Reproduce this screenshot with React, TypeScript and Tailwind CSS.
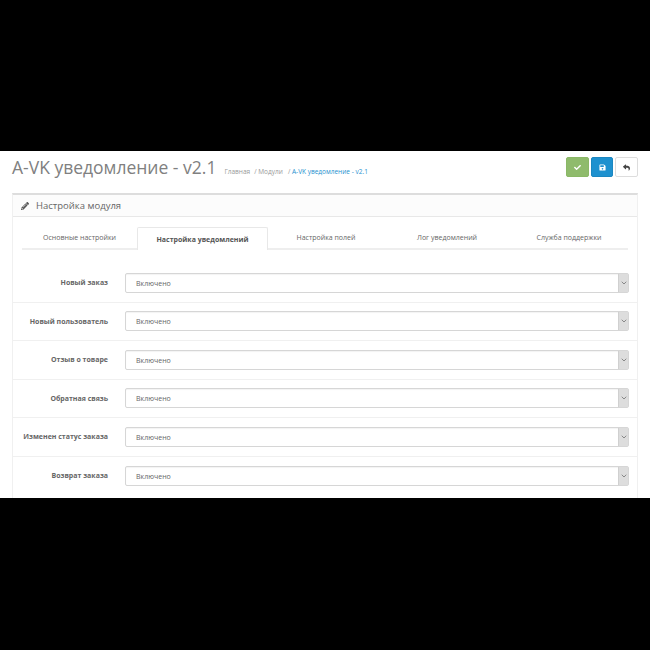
import { FaCheck, FaPencilAlt, FaReply, FaSave } from "react-icons/fa"
import { ChevronDown } from "lucide-react"

const tabs = [
  { label: "Основные настройки", width: "w-[115px]" },
  { label: "Настройка уведомлений", width: "w-[131px]" },
  { label: "Настройка полей", width: "w-[116px]" },
  { label: "Лог уведомлений", width: "w-[126px]" },
  { label: "Служба поддержки", width: "flex-1" },
]

const rows = ["Новый заказ", "Новый пользователь", "Отзыв о товаре", "Обратная связь", "Изменен статус заказа", "Возврат заказа"]

function SelectRow({ label }: { label: string }) {
  return (
    <div className="flex items-center h-[38.5px] shrink-0 border-b border-[#f0f0f0] last:border-b-0 px-[8px]">
      <div className="w-[87px] pt-[1px] shrink-0 text-right text-[7px] font-bold text-[#666] whitespace-nowrap">{label}</div>
      <div className="ml-[17px] flex-1 h-[20px] flex items-stretch bg-white border border-[#d6d6d6] rounded-[2px] shadow-[inset_0_1px_1px_rgba(0,0,0,0.05)]">
        <div className="flex-1 pl-[10px] text-[7px] leading-[20px] text-[#666]">Включено</div>
        <div className="w-[10px] bg-[#ddd] border-l border-[#d0d0d0] flex items-center justify-center">
          <ChevronDown size={8} strokeWidth={2.5} className="text-[#777]" />
        </div>
      </div>
    </div>
  )
}

export default function App() {
  return (
    <div className="w-[650px] h-[650px] flex flex-col bg-black font-['Open_Sans',sans-serif]">
      <div className="h-[151px] shrink-0" />
      <div className="h-[347px] shrink-0 bg-white overflow-hidden px-[12px]">
        <div className="h-[42px] flex items-start justify-between">
          <div className="flex items-baseline mt-[4px]">
            <h1 className="text-[17.5px] leading-[24px] font-normal text-[#808080] whitespace-nowrap">A-VK уведомление - v2.1</h1>
            <div className="ml-[8px] flex text-[6.5px] text-[#999] whitespace-nowrap">
              <span>Главная</span>
              <span className="ml-[4px]">/ Модули</span>
              <span className="ml-[5px]">/ <span className="text-[#1e91cf]">A-VK уведомление - v2.1</span></span>
            </div>
          </div>
          <div className="flex gap-[2px] mt-[6px]">
            <div className="w-[23px] h-[20px] rounded-[2px] bg-[#8fbb6c] border border-[#8ab866] flex items-center justify-center text-white">
              <FaCheck size={7} />
            </div>
            <div className="w-[22px] h-[20px] rounded-[2px] bg-[#1e91cf] border border-[#1b87c1] flex items-center justify-center text-white">
              <FaSave size={7} />
            </div>
            <div className="w-[23px] h-[20px] rounded-[2px] bg-white border border-[#ddd] flex items-center justify-center text-[#444]">
              <FaReply size={7} />
            </div>
          </div>
        </div>

        <div className="border-x border-[#f0f0f0] border-t-2 border-t-[#ddd]">
          <div className="h-[22px] flex items-center pl-[8px] bg-[#fcfcfc] border-b border-[#e8e8e8] text-[#666]">
            <FaPencilAlt size={8} className="text-[#555]" />
            <span className="ml-[7px] text-[9.5px] leading-none">Настройка модуля</span>
          </div>

          <div className="pt-[10px] px-[9px]">
            <div className="flex h-[23px] border-b-2 border-[#eee]">
              {tabs.map((tab, i) => (
                <div
                  key={tab.label}
                  className={
                    i === 1
                      ? `${tab.width} -mb-[2px] h-[23px] pt-[2px] shrink-0 flex items-center justify-center bg-white border border-b-0 border-[#e8e8e8] rounded-t-[2px] text-[7px] font-bold text-[#555] whitespace-nowrap`
                      : `${tab.width} pt-[2px] shrink-0 flex items-center justify-center text-[7px] text-[#666] whitespace-nowrap`
                  }
                >
                  {tab.label}
                </div>
              ))}
            </div>
          </div>

          <div className="mt-[14px] pb-[12px] flex flex-col">
            {rows.map((row) => (
              <SelectRow key={row} label={row} />
            ))}
          </div>
        </div>
      </div>
      <div className="flex-1" />
    </div>
  )
}
